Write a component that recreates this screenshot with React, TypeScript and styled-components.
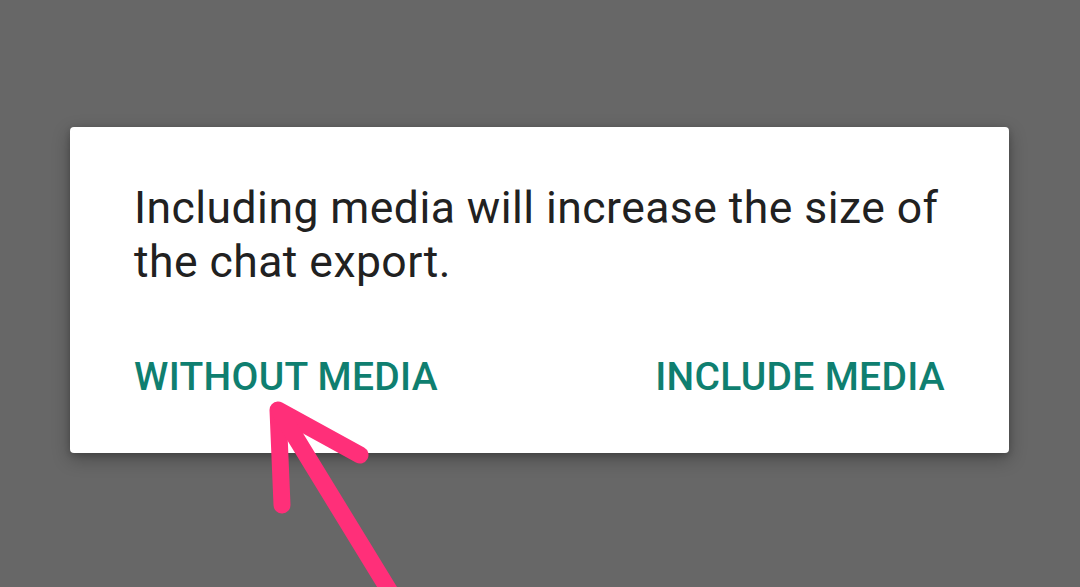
import React from "react";
import styled, { createGlobalStyle } from "styled-components";

const Global = createGlobalStyle`
  html, body { margin: 0; padding: 0; }
  body { background: #676767; font-family: Roboto, "Noto Sans", sans-serif; }
`;

const Screen = styled.div`
  position: relative;
  width: 1080px;
  height: 587px;
  overflow: hidden;
  background: #676767;
  padding: 127px 71px 0 70px;
  box-sizing: border-box;
`;

const Dialog = styled.div`
  background: #ffffff;
  border-radius: 4px;
  box-shadow: 0 6px 18px rgba(0, 0, 0, 0.28), 0 2px 6px rgba(0, 0, 0, 0.18);
  padding: 54px 64px 0 64px;
  display: flex;
  flex-direction: column;
  gap: 68px;
  height: 326px;
  box-sizing: border-box;
`;

const Message = styled.p`
  margin: 0;
  font-family: Roboto, sans-serif;
  font-size: 44.5px;
  line-height: 54px;
  color: #212121;
  letter-spacing: 0.45px;
`;

const Actions = styled.div`
  display: flex;
  justify-content: space-between;
  align-items: center;
`;

const ActionButton = styled.button`
  border: 0;
  background: none;
  padding: 0;
  font-family: Roboto, sans-serif;
  font-weight: 500;
  font-size: 39px;
  line-height: 40px;
  color: #0f7f70;
  letter-spacing: 0.3px;
  cursor: pointer;
`;

const Arrow = styled.svg`
  position: absolute;
  left: 0;
  top: 0;
  pointer-events: none;
`;

export default function App() {
  return (
    <>
      <Global />
      <Screen>
        <Dialog>
          <Message>
            Including media will increase the size of
            <br />
            the chat export.
          </Message>
          <Actions>
            <ActionButton>WITHOUT MEDIA</ActionButton>
            <ActionButton>INCLUDE MEDIA</ActionButton>
          </Actions>
        </Dialog>
        <Arrow width="1080" height="587" viewBox="0 0 1080 587">
          <g
            fill="none"
            stroke="#ff2f79"
            strokeWidth="17"
            strokeLinecap="round"
            strokeLinejoin="round"
          >
            <path d="M 282 505 L 278 410 L 360 455" />
            <path d="M 280 412 L 395 600" />
          </g>
        </Arrow>
      </Screen>
    </>
  );
}
